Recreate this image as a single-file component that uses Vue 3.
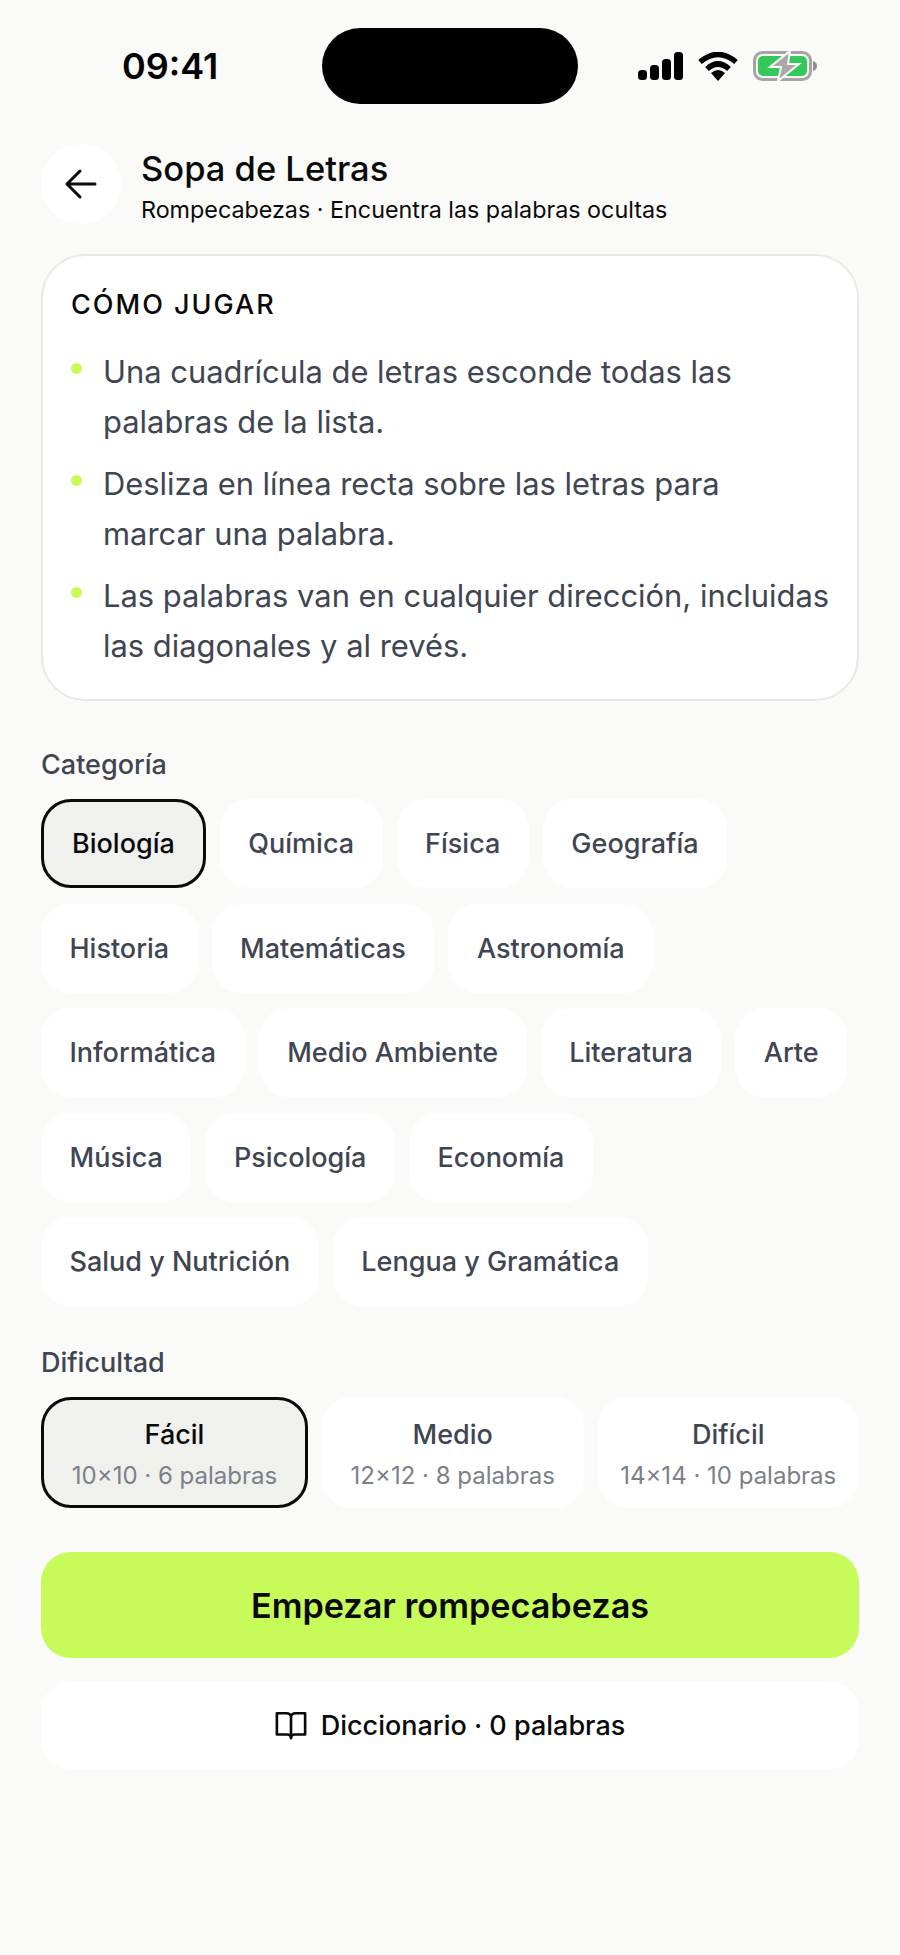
<template>
  <div class="screen">
    <div class="status-bar">
      <span class="time">09:41</span>
      <div class="island"></div>
      <div class="status-icons">
        <svg width="46" height="28" viewBox="0 0 46 28">
          <rect x="1" y="18" width="9" height="10" rx="3.500" fill="#000" />
          <rect x="13" y="13" width="9" height="15" rx="3.500" fill="#000" />
          <rect x="25" y="7" width="9" height="21" rx="3.500" fill="#000" />
          <rect x="37" y="0" width="9" height="28" rx="3.500" fill="#000" />
        </svg>
        <svg width="40" height="29" viewBox="0 0 40 29">
          <path d="M2 10 Q20 -5 38 10" fill="none" stroke="#000" stroke-width="5.5" />
          <path d="M9 17 Q20 7 31 17" fill="none" stroke="#000" stroke-width="5.5" />
          <path d="M13 21 Q20 15 27 21 L20 29 Z" fill="#000" />
        </svg>
        <svg width="65" height="30" viewBox="0 0 65 30">
          <rect x="1.5" y="1.5" width="56" height="27" rx="8" fill="none" stroke="#a5a5a5" stroke-width="3" />
          <rect x="5" y="5" width="49" height="20" rx="5" fill="#34c759" />
          <path d="M60 10 q4 1 4 5 t-4 5 Z" fill="#8e8e8e" />
          <path d="M37 0 L17 16 H28 L25 30 L46 13 H35 Z" fill="#a9a9a9" stroke="#fafaf8" stroke-width="2" />
        </svg>
      </div>
    </div>

    <header class="top">
      <button class="back">
        <svg width="34" height="34" viewBox="0 0 34 34" fill="none" stroke="#0a0a0a" stroke-width="3" stroke-linecap="round" stroke-linejoin="round">
          <path d="M31 17 H4 M16 4 L3 17 L16 30" />
        </svg>
      </button>
      <div class="top-text">
        <h1>Sopa de Letras</h1>
        <p>Rompecabezas · Encuentra las palabras ocultas</p>
      </div>
    </header>

    <section class="how">
      <h2>CÓMO JUGAR</h2>
      <ul>
        <li v-for="rule in rules" :key="rule">{{ rule }}</li>
      </ul>
    </section>

    <div class="label">Categoría</div>
    <div class="chips">
      <button
        v-for="(cat, i) in categories"
        :key="cat"
        class="chip"
        :class="{ active: i === 0 }"
      >{{ cat }}</button>
    </div>

    <div class="label diff-label">Dificultad</div>
    <div class="levels">
      <button
        v-for="(level, i) in levels"
        :key="level.name"
        class="level"
        :class="{ active: i === 0 }"
      >
        <span class="level-name">{{ level.name }}</span>
        <span class="level-info">{{ level.info }}</span>
      </button>
    </div>

    <button class="start">Empezar rompecabezas</button>
    <button class="dict">
      <svg width="32" height="30" viewBox="0 0 34 30" fill="none" stroke="#0a0a0a" stroke-width="2.8" stroke-linecap="round" stroke-linejoin="round">
        <path d="M17 6 C17 3 15 1.500 12 1.500 H2 V24 H13 C15 24 17 25.500 17 28 C17 25.500 19 24 21 24 H32 V1.500 H22 C19 1.500 17 3 17 6 Z M17 6 V28" />
      </svg>
      Diccionario · 0 palabras
    </button>
  </div>
</template>

<script setup>
const rules = [
  'Una cuadrícula de letras esconde todas las palabras de la lista.',
  'Desliza en línea recta sobre las letras para marcar\u00a0una palabra.',
  'Las palabras van en cualquier dirección, incluidas las diagonales y al revés.'
]

const categories = [
  'Biología', 'Química', 'Física', 'Geografía', 'Historia', 'Matemáticas',
  'Astronomía', 'Informática', 'Medio Ambiente', 'Literatura', 'Arte', 'Música',
  'Psicología', 'Economía', 'Salud y Nutrición', 'Lengua y Gramática'
]

const levels = [
  { name: 'Fácil', info: '10×10 · 6 palabras' },
  { name: 'Medio', info: '12×12 · 8 palabras' },
  { name: 'Difícil', info: '14×14 · 10 palabras' }
]
</script>

<style>
html, body {
  background: #fafaf8;
}
</style>

<style scoped>
.screen {
  height: 1955px;
  box-sizing: border-box;
  padding: 28px 41px 0;
  background: #fafaf8;
  font-family: "Inter", "Liberation Sans", sans-serif;
  color: #0a0a0a;
}

button {
  font-family: inherit;
  border: none;
  cursor: pointer;
}

.status-bar {
  display: grid;
  grid-template-columns: 200px 256px 1fr;
  align-items: center;
  margin: 0 -41px;
  padding-left: 122px;
  padding-right: 82px;
}

.time {
  font-size: 36px;
  font-weight: 600;
  color: #000;
}

.island {
  height: 76px;
  border-radius: 38px;
  background: #000;
}

.status-icons {
  display: flex;
  justify-content: flex-end;
  align-items: center;
  gap: 15px;
}

.top {
  display: flex;
  align-items: center;
  gap: 20px;
  margin: 40px 0 0;
}

.back {
  width: 80px;
  height: 80px;
  border-radius: 50%;
  background: #fff;
  display: flex;
  align-items: center;
  justify-content: center;
  flex: none;
}

.top-text {
  padding-top: 4px;
}

h1 {
  margin: 0;
  font-size: 34.500px;
  line-height: 42px;
  font-weight: 500;
}

.top p {
  margin: 6px 0 0;
  font-size: 23.300px;
  line-height: 28px;
}

.how {
  margin-top: 30px;
  background: #fff;
  border: 2px solid #e8e8e4;
  border-radius: 44px;
  padding: 32px 20px 26px 28px;
  height: 447px;
  box-sizing: border-box;
}

h2 {
  margin: 0 0 25px;
  font-size: 27px;
  line-height: 34px;
  font-weight: 500;
  letter-spacing: 2px;
}

ul {
  list-style: none;
  margin: 0;
  padding: 0;
}

li {
  position: relative;
  padding-left: 32px;
  font-size: 30.900px;
  line-height: 50px;
  color: #404552;
  margin-bottom: 12px;
}

li::before {
  content: "";
  position: absolute;
  left: 0;
  top: 16px;
  width: 11px;
  height: 11px;
  border-radius: 50%;
  background: #c6fb5a;
}

.label {
  margin-top: 47px;
  font-size: 27px;
  line-height: 34px;
  font-weight: 500;
  color: #404552;
}

.diff-label {
  margin-top: 40px;
}

.chips {
  display: flex;
  flex-wrap: wrap;
  gap: 15.500px 14px;
  margin-top: 17px;
}

.chip {
  height: 89px;
  padding: 0 28.500px;
  border-radius: 30px;
  background: #fff;
  font-size: 27px;
  font-weight: 500;
  color: #404552;
}

.chip.active {
  padding: 0 28px;
}

.chip.active,
.level.active {
  background: #f0f0ed;
  border: 3px solid #0a0a0a;
  color: #0a0a0a;
}

.levels {
  display: grid;
  grid-template-columns: 267px 1fr 1fr;
  gap: 14px;
  margin-top: 17px;
}

.level {
  height: 111px;
  padding: 3px 0 0;
  border-radius: 30px;
  background: #fff;
  color: #404552;
  display: flex;
  flex-direction: column;
  align-items: center;
  justify-content: center;
  gap: 10px;
}

.level-name {
  font-size: 27px;
  font-weight: 500;
}

.level-info {
  font-size: 24px;
  color: #7b808a;
}

.start {
  display: block;
  width: 100%;
  height: 106px;
  margin-top: 44px;
  border-radius: 30px;
  background: #c6fb5a;
  color: #0a0a0a;
  font-size: 34.200px;
  font-weight: 600;
}

.dict {
  width: 100%;
  height: 87px;
  margin-top: 24px;
  border-radius: 30px;
  background: #fff;
  color: #0a0a0a;
  font-size: 27px;
  font-weight: 500;
  display: flex;
  align-items: center;
  justify-content: center;
  gap: 14px;
}
</style>
